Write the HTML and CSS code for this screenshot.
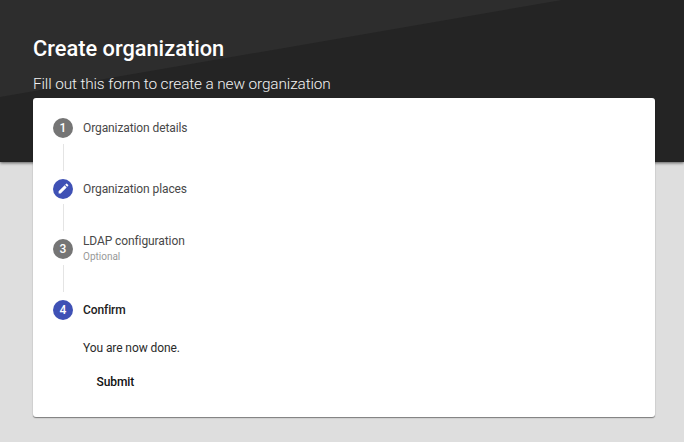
FILE: index.html
```html
<!DOCTYPE html>
<html lang="en">
<head>
<meta charset="utf-8">
<title>Create organization</title>
<link rel="stylesheet" href="styles.css">
</head>
<body>
<div class="hero"></div>
<main class="page">
  <h1 class="title">Create organization</h1>
  <p class="subtitle">Fill out this form to create a new organization</p>
  <section class="card">
    <ol class="steps">
      <li class="step"><span class="badge">1</span><span class="label">Organization details</span></li>
      <li class="step"><span class="badge active"><svg class="pencil" viewBox="0 0 24 24"><path d="M3 17.25V21h3.75L17.81 9.94l-3.75-3.75L3 17.25zM20.71 7.04a1 1 0 0 0 0-1.41l-2.34-2.34a1 1 0 0 0-1.41 0l-1.83 1.83 3.75 3.75 1.83-1.83z"/></svg></span><span class="label">Organization places</span></li>
      <li class="step"><span class="badge">3</span><span class="label">LDAP configuration<small class="optional">Optional</small></span></li>
      <li class="step"><span class="badge active">4</span><span class="label current">Confirm</span></li>
    </ol>
    <div class="content">
      <p class="message">You are now done.</p>
      <button class="submit" type="button">Submit</button>
    </div>
  </section>
</main>
</body>
</html>
```
FILE: styles.css
```css
* { box-sizing: border-box; }
body {
  margin: 0;
  height: 442px;
  overflow: hidden;
  background: #dedede;
  color: #2b2b2b;
  font-family: Roboto, "Liberation Sans", sans-serif;
}
.hero {
  position: absolute;
  inset: 0 0 auto;
  height: 161.5px;
  background: #242424;
  box-shadow: 0 1px 3px rgba(0, 0, 0, .6);
}
.hero::before {
  content: "";
  display: block;
  width: 562px;
  height: 97px;
  background: #2d2d2d;
  clip-path: polygon(0 0, 100% 0, 0 100%);
}
.page { position: relative; padding: 36px 29px 0 33px; }
.title {
  margin: 0;
  color: #fff;
  font-size: 21.8px;
  line-height: 26px;
  font-weight: 500;
}
.subtitle {
  margin: 12px 0 0;
  color: #f2f2f2;
  font-size: 15.4px;
  letter-spacing: -.13px;
  line-height: 20px;
  font-weight: 300;
}
.card {
  height: 319.5px;
  margin-top: 3.5px;
  padding: 10px 20px;
  border-radius: 3px;
  background: #fff;
  box-shadow: 0 1px 1px rgba(0, 0, 0, .4), 0 1px 2px rgba(0, 0, 0, .08);
}
.steps { margin: 0; padding: 0; list-style: none; }
.step {
  position: relative;
  display: flex;
  align-items: center;
  gap: 10px;
  height: 41px;
  margin-bottom: 19.5px;
}
.step:not(:last-child)::after {
  content: "";
  position: absolute;
  left: 10px;
  top: 36px;
  width: 1px;
  height: 27px;
  background: #e4e4e4;
}
.badge {
  display: flex;
  align-items: center;
  justify-content: center;
  width: 20px;
  height: 20px;
  border-radius: 50%;
  background: #757575;
  color: #fff;
  font-size: 12px;
  font-weight: 500;
  line-height: 20px;
}
.badge.active { background: #3f51b5; }
.pencil { width: 13px; height: 13px; fill: #fff; }
.label { color: #484848; font-size: 12px; letter-spacing: -.1px; line-height: 16px; }
.step:nth-child(even) .label { padding-top: 1px; }
.step .current { color: #212121; font-weight: 500; }
.optional { display: block; color: #999; font-size: 10px; letter-spacing: 0; line-height: 16px; }
.content { margin-top: -9.5px; padding-left: 30px; }
.message { margin: 0; font-size: 12px; letter-spacing: -.09px; line-height: 16px; }
.submit {
  display: block;
  margin: 10px 0 0;
  padding: 0 13.5px;
  height: 32px;
  border: 0;
  background: none;
  color: #111;
  font: 500 12px/32px Roboto, "Liberation Sans", sans-serif;
  letter-spacing: -.1px;
}
```
